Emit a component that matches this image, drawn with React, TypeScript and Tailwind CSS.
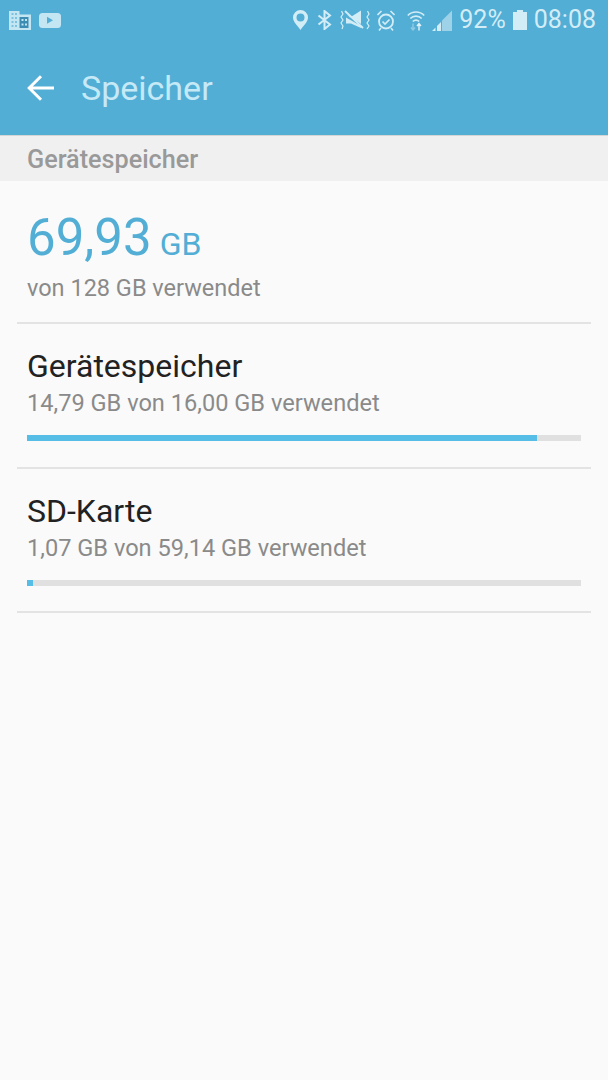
const light = "#d3edf7";

function LeftIcons() {
  return (
    <div className="flex items-center gap-[8px]">
      <svg width="22" height="19" viewBox="0 0 22 19">
        <path d="M0 0h10.500v3.500H22V19H0z" fill="#c4e6f3" />
        <rect x="10.500" y="6" width="9" height="11" fill="#3d8db3" />
        <g fill="#7cc3df">
          <rect x="2.500" y="2" width="2" height="2" />
          <rect x="6" y="2" width="2" height="2" />
          <rect x="2.500" y="6" width="2" height="2" />
          <rect x="6" y="6" width="2" height="2" />
          <rect x="2.500" y="10" width="2" height="2" />
          <rect x="6" y="10" width="2" height="2" />
          <rect x="2.500" y="14" width="2" height="2" />
          <rect x="6" y="14" width="2" height="2" />
        </g>
        <g fill="#c4e6f3">
          <rect x="12.500" y="8" width="2" height="2" />
          <rect x="16" y="8" width="2" height="2" />
          <rect x="12.500" y="12.500" width="2" height="2" />
          <rect x="16" y="12.500" width="2" height="2" />
        </g>
      </svg>
      <svg width="22" height="15" viewBox="0 0 22 15">
        <rect width="22" height="15" rx="3.500" fill="#c4e6f3" />
        <path d="M8 3.800v7l6-3.500z" fill="#52aed5" />
      </svg>
    </div>
  );
}

function RightIcons() {
  return (
    <div className="flex items-center">
      <svg width="15" height="20" viewBox="0 0 15 20" className="mr-[9px]">
        <path
          fillRule="evenodd"
          d="M7.500 0A7.500 7.500 0 0 1 15 7.500C15 12 10 16 7.500 20 5 16 0 12 0 7.500A7.500 7.500 0 0 1 7.500 0zm0 3.500a4 4 0 1 0 0 8 4 4 0 0 0 0-8z"
          fill={light}
        />
      </svg>
      <svg width="15" height="20" viewBox="0 0 15 20" className="mr-[8px]">
        <path d="M1.500 5.500l11.500 9L7.500 19V1L13 5.500l-11.500 9" fill="none" stroke={light} strokeWidth="2" />
      </svg>
      <svg width="30" height="20" viewBox="0 0 30 20" className="mr-[7px]">
        <path d="M7 4.500L10 7.500 21 .5v13.500z" fill={light} />
        <path d="M6 7.500v6h5l10 4.500v-2z" fill={light} />
        <path d="M5 1l18 17" stroke={light} strokeWidth="1.800" />
        <path d="M1.500 1l1.500 3-2 3 2 3-2 3 2 3-1 3M27.500 1l1.500 3-2 3 2 3-2 3 2 3-2 3" fill="none" stroke={light} strokeWidth="1.200" />
      </svg>
      <svg width="18" height="21" viewBox="0 0 18 21" className="mr-[12px]">
        <circle cx="9" cy="11.500" r="7" fill="none" stroke={light} strokeWidth="1.800" />
        <path d="M5.500 11.500l2.500 2.500 4.500-4.500" fill="none" stroke={light} strokeWidth="1.600" />
        <path d="M.5 5l4-4M17.500 5l-4-4M4 18l-2 2.500M14 18l2 2.500" stroke={light} strokeWidth="1.600" />
      </svg>
      <svg width="18" height="21" viewBox="0 0 18 21" className="mr-[7px]">
        <path d="M.8 5.500a11.500 11.500 0 0 1 16.400 0M3.300 8.500a8 8 0 0 1 11.400 0M5.800 11.500a4.500 4.500 0 0 1 6.400 0" fill="none" stroke={light} strokeWidth="1.600" />
        <path d="M6 13.500v6M4 17.500l2 2.500 2-2.500" fill="none" stroke="#8fcbe4" strokeWidth="1.400" />
        <path d="M12 20.500v-6.500M10 16l2-2.500 2 2.500" fill="none" stroke="#e4f4fa" strokeWidth="1.400" />
      </svg>
      <svg width="20" height="21" viewBox="0 0 20 21" className="mr-[7px]">
        <path d="M10 10.500L20 .5V21H10z" fill="#9dd2e8" />
        <path d="M0 21l3.500-3.500V21zM5 16l4-4v9H5z" fill={light} />
      </svg>
      <span className="text-[25px] text-[#d3edf7] mr-[7px]">92%</span>
      <svg width="14" height="20" viewBox="0 0 14 20" className="mr-[7px]">
        <path d="M4 0h6v2h4v18H0V2h4z" fill={light} />
      </svg>
      <span className="text-[25px] text-[#d3edf7]">08:08</span>
    </div>
  );
}

function StorageRow({ title, detail, percent, height }: { title: string; detail: string; percent: number; height: string }) {
  return (
    <div className={`mx-[17px] border-b-2 border-[#e3e3e3] px-[10px] pt-[24px] ${height}`}>
      <div className="text-[32px] leading-[37px] text-[#222222]">{title}</div>
      <div className="text-[23.600px] leading-[37px] text-[#8a8a8a]">{detail}</div>
      <div className="mt-[13px] h-[6px] bg-[#e0e0e0]">
        <div className="h-full bg-[#56bde6]" style={{ width: `${percent}%` }} />
      </div>
    </div>
  );
}

export default function App() {
  return (
    <div className="h-[1080px] bg-[#fafafa] font-['Roboto',sans-serif]">
      <div className="h-[136px] bg-[#52aed5] border-b border-[#d5d5d5]">
        <div className="h-[40px] flex items-center justify-between pl-[9px] pr-[12px]">
          <LeftIcons />
          <RightIcons />
        </div>
        <div className="flex items-center h-[95px] pl-[27px]">
          <svg width="27" height="26" viewBox="0 0 27 26">
            <path d="M27 13H3M14 1.200L2.200 13 14 24.800" fill="none" stroke="#ffffff" strokeWidth="3" />
          </svg>
          <span className="ml-[27px] pt-[2px] text-[34px] text-[#c5e9f6]">Speicher</span>
        </div>
      </div>
      <div className="h-[45px] bg-[#f0f0f0] flex items-center pl-[27px] pt-[2px] text-[25.200px] font-medium text-[#999999]">
        Gerätespeicher
      </div>
      <div className="mx-[17px] border-b-2 border-[#e3e3e3] h-[143px] px-[10px] pt-[28px]">
        <div className="flex items-baseline leading-[57px] text-[#52aed5]">
          <span className="text-[51px]">69,93</span>
          <span className="ml-[8px] text-[32px]">GB</span>
        </div>
        <div className="text-[23.500px] leading-[30px] text-[#8a8a8a]">von 128 GB verwendet</div>
      </div>
      <StorageRow title="Gerätespeicher" detail="14,79 GB von 16,00 GB verwendet" percent={92} height="h-[145px]" />
      <StorageRow title="SD-Karte" detail="1,07 GB von 59,14 GB verwendet" percent={1} height="h-[144px]" />
    </div>
  );
}
